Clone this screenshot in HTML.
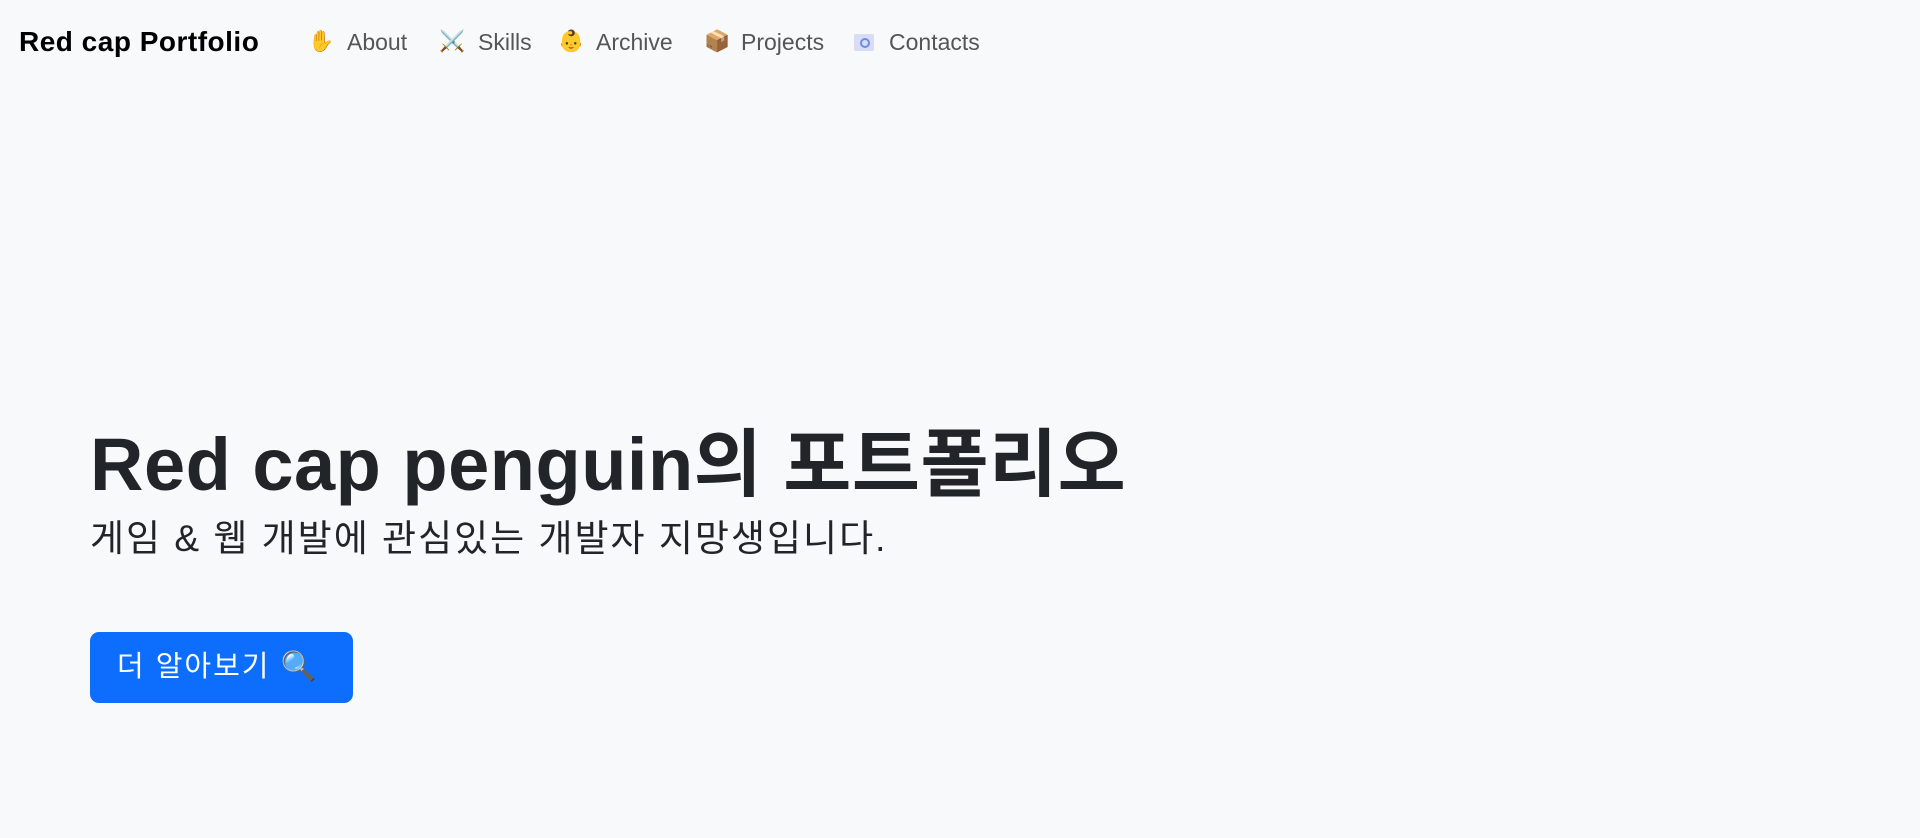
<!DOCTYPE html>
<html><head><meta charset="utf-8"><style>
html,body{margin:0;padding:0;width:1920px;height:838px;background:#f8f9fa;overflow:hidden;font-family:"Liberation Sans","Noto Sans CJK KR",sans-serif;color:#212529}
.nav{position:absolute;top:0;left:0;width:1920px;height:86px}
.brand{position:absolute;left:19px;top:26px;font-size:28px;font-weight:bold;color:#000;white-space:nowrap;letter-spacing:0.5px}
.it{position:absolute;top:29px;font-size:23px;color:#555;white-space:nowrap}
.ic{position:absolute;top:30px;font-size:21px}
h1{position:absolute;left:90px;top:405px;margin:0;font-size:74px;font-weight:bold;white-space:nowrap;letter-spacing:0.5px}
.sub{position:absolute;left:90px;top:508px;font-size:37px;white-space:nowrap;letter-spacing:2px}
.btn{position:absolute;left:90px;top:632px;width:263px;height:71px;background:#0d6efd;border-radius:9px;color:#fff;font-size:29px;line-height:71px;box-sizing:border-box;padding-left:27px;white-space:nowrap;letter-spacing:2px}
.idb{position:absolute;left:854px;top:34px;width:20px;height:17px;background:#d9dcf5;border-radius:2px}
.idb:after{content:"";position:absolute;left:6px;top:4px;width:6px;height:6px;border:2px solid #6b8ee0;border-radius:50%}
</style></head><body>
<div class="nav">
<div class="brand">Red cap Portfolio</div>
<span class="ic" style="left:308px">✋</span><span class="it" style="left:347px">About</span>
<span class="ic" style="left:439px">⚔️</span><span class="it" style="left:478px">Skills</span>
<span class="ic" style="left:558px">👶</span><span class="it" style="left:596px">Archive</span>
<span class="ic" style="left:704px">📦</span><span class="it" style="left:741px">Projects</span>
<span class="idb"></span><span class="it" style="left:889px">Contacts</span>
</div>
<h1>Red cap penguin의 포트폴리오</h1>
<div class="sub">게임 &amp; 웹 개발에 관심있는 개발자 지망생입니다.</div>
<div class="btn">더 알아보기 🔍</div>
</body></html>
